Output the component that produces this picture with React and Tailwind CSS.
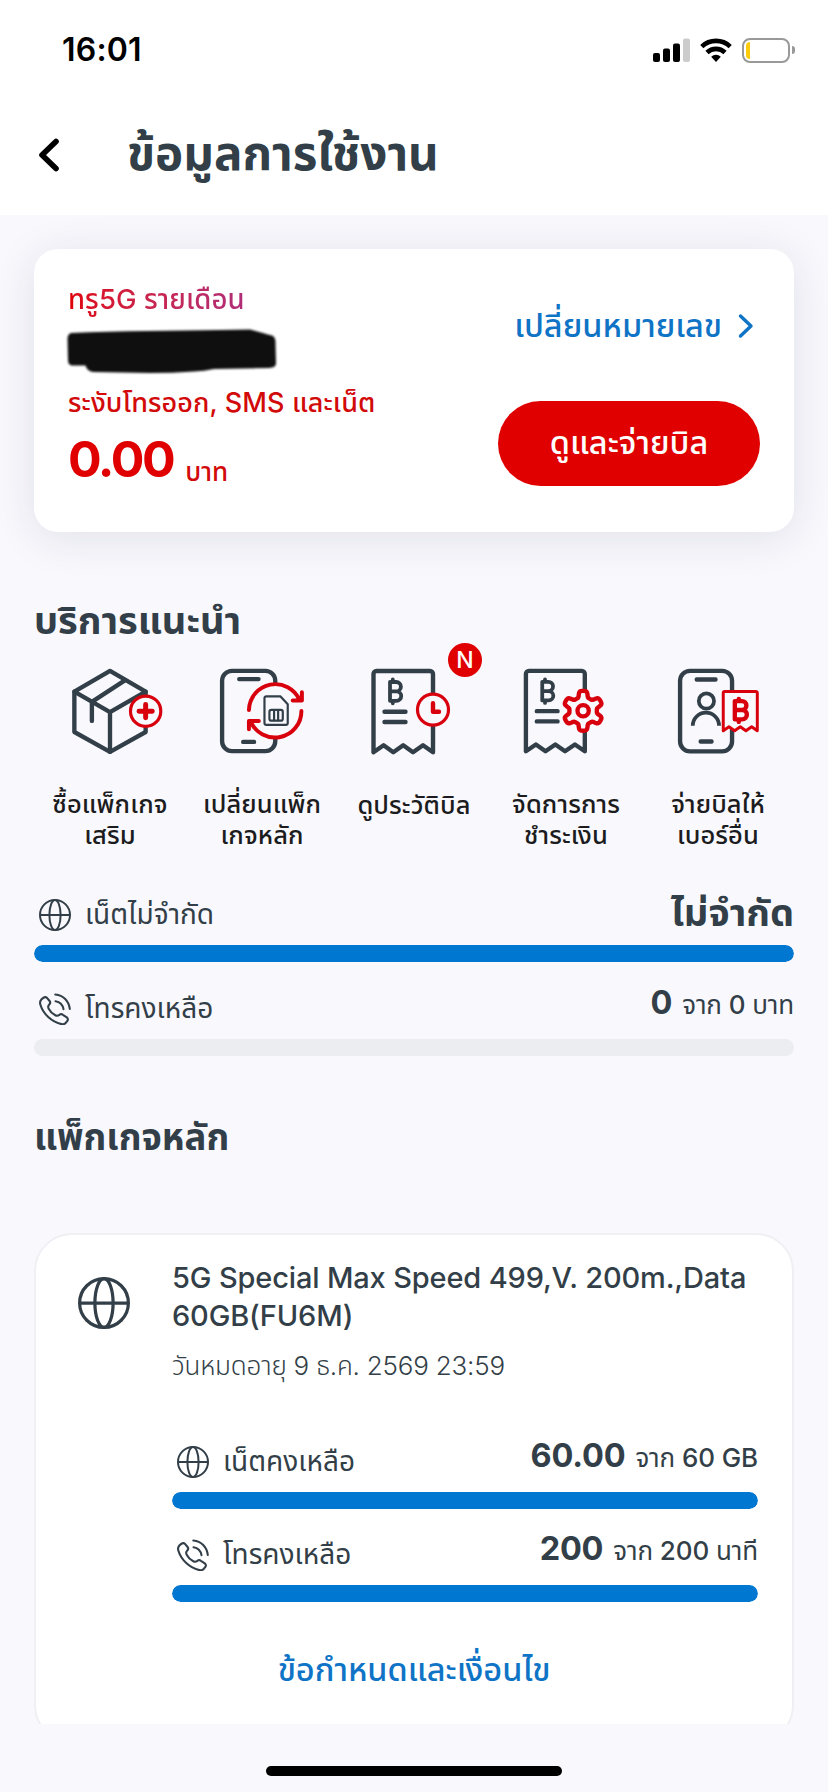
import React from "react";

const services = [
  { icon: PackageIcon, lines: ["ซื้อแพ็กเกจ", "เสริม"] },
  { icon: ChangePlanIcon, lines: ["เปลี่ยนแพ็ก", "เกจหลัก"] },
  { icon: BillHistoryIcon, lines: ["ดูประวัติบิล"], badge: "N" },
  { icon: PaymentIcon, lines: ["จัดการการ", "ชำระเงิน"] },
  { icon: PayForOtherIcon, lines: ["จ่ายบิลให้", "เบอร์อื่น"] },
];

const overview = [
  { icon: GlobeIcon, label: "เน็ตไม่จำกัด", total: "ไม่จำกัด", percent: 100 },
  { icon: CallIcon, label: "โทรคงเหลือ", value: "0", suffix: "จาก 0 บาท", percent: 0 },
];

const packageUsage = [
  { icon: GlobeIcon, label: "เน็ตคงเหลือ", value: "60.00", suffix: "จาก 60 GB", percent: 100 },
  { icon: CallIcon, label: "โทรคงเหลือ", value: "200", suffix: "จาก 200 นาที", percent: 100 },
];

// six rounded teeth, one pointing straight up
const gearPath =
  Array.from({ length: 120 }, (_, i) => {
    const a = (i / 120) * Math.PI * 2;
    const r = 17 + 3.2 * Math.tanh(2.4 * Math.cos(6 * a));
    const x = 77.3 + r * Math.sin(a);
    const y = 50.3 - r * Math.cos(a);
    return `${i ? "L" : "M"}${x.toFixed(2)} ${y.toFixed(2)}`;
  }).join("") + "Z";

function ServiceSvg({ children }) {
  return (
    <svg
      viewBox="0 0 120 100"
      fill="none"
      strokeLinecap="round"
      strokeLinejoin="round"
      strokeWidth="4.400"
      className="h-[100px] w-[120px] stroke-[#333f48]"
    >
      {children}
    </svg>
  );
}

function PackageIcon() {
  return (
    <ServiceSvg>
      <path d="M60 10 24 31v40.700L60 91.700l36-20V31L60 10Z" />
      <path d="M24 31l36 20.700L96 31M60 51.700v40M41.700 60.500V41.300L75 19.500" />
      <circle cx="96" cy="50.700" r="15.300" strokeWidth="3.200" className="fill-[#f8f8fd] stroke-[#d9000d]" />
      <path d="M96 44v13.400M89.300 50.700h13.400" strokeWidth="5" className="stroke-[#d9000d]" />
    </ServiceSvg>
  );
}

function ChangePlanIcon() {
  return (
    <ServiceSvg>
      <rect x="19.700" y="10" width="53.700" height="81" rx="10" />
      <path d="M37 18.300h19.500M41 81.700h11" />
      <circle cx="73.500" cy="50" r="26.500" stroke="none" className="fill-[#f8f8fd]" />
      <g strokeWidth="4" className="stroke-[#d9000d]">
        <path d="M46.800 49.500A26.700 26.700 0 0 1 98 39.500M100.300 31.500V40H91" />
        <path d="M99.800 50.500A26.700 26.700 0 0 1 48.500 61M46.800 69v-8.500h10" />
      </g>
      <g strokeWidth="2.200">
        <path d="M64.500 35.700h14l7.500 8v18.800a2 2 0 0 1-2 2H64.500a2 2 0 0 1-2-2V37.700a2 2 0 0 1 2-2Z" />
        <rect x="67.500" y="49.300" width="13.500" height="11" rx="2" />
        <path d="M72.200 49.500v10.500M76.300 49.500v10.500" />
      </g>
    </ServiceSvg>
  );
}

function Receipt() {
  return (
    <>
      <path d="M19.500 91.200V13a3 3 0 0 1 3-3H76a3 3 0 0 1 3 3v78.200L69 84.300l-10 6.900-9.800-6.900-9.900 6.900-9.700-6.900-10.100 6.900Z" />
      <path
        d="M36 21h6.200a4.700 4.700 0 0 1 0 9.400H36h6.500a4.700 4.700 0 0 1 0 9.400H36V21ZM38.800 18.500V21M38.800 39.800v2.500"
        strokeWidth="3.800"
      />
      <path d="M30.500 50.700h21M30.500 61h21" />
    </>
  );
}

function BillHistoryIcon() {
  return (
    <ServiceSvg>
      <Receipt />
      <circle cx="79" cy="48.700" r="15.500" strokeWidth="3.200" className="fill-[#f8f8fd] stroke-[#d9000d]" />
      <path d="M79 42.300v8.400h6" className="stroke-[#d9000d]" />
    </ServiceSvg>
  );
}

function PaymentIcon() {
  return (
    <ServiceSvg>
      <Receipt />
      <path d={gearPath} className="fill-[#f8f8fd] stroke-[#d9000d]" />
      <circle cx="77.300" cy="50.300" r="5.700" className="stroke-[#d9000d]" />
    </ServiceSvg>
  );
}

function PayForOtherIcon() {
  return (
    <ServiceSvg>
      <rect x="21.700" y="10" width="52.500" height="81.300" rx="10" />
      <path d="M38.500 18.700h19M42.500 81.300h11" />
      <circle cx="48.300" cy="40.500" r="7.700" strokeWidth="3.800" />
      <path d="M34.500 65.500a13.300 13.300 0 0 1 26.600 0" strokeWidth="3.800" strokeLinecap="butt" />
      <g className="stroke-[#d9000d]">
        <path
          d="M65.300 70.500V32.200a1.500 1.500 0 0 1 1.500-1.500h31.400a1.500 1.500 0 0 1 1.500 1.500v38.300l-5.700-4-5.800 4-5.700-4-5.700 4-5.700-4-5.800 4Z"
          strokeWidth="3"
          className="fill-[#f8f8fd]"
        />
        <path d="M77 40.500h7.200a4.500 4.500 0 0 1 0 9H77h7.500a4.700 4.700 0 0 1 0 9.400H77V40.500ZM81 38.200v2.300M81 58.900v2.600" />
      </g>
    </ServiceSvg>
  );
}

function GlobeIcon({ className }) {
  return (
    <svg viewBox="0 0 32 32" fill="none" stroke="currentColor" strokeWidth="2" className={className}>
      <circle cx="16" cy="16" r="15" />
      <ellipse cx="16" cy="16" rx="5.600" ry="15" />
      <path d="M1 16h30" />
    </svg>
  );
}

function CallIcon({ className }) {
  return (
    <svg
      viewBox="0 0 32 32"
      fill="none"
      stroke="currentColor"
      strokeWidth="2.100"
      strokeLinecap="round"
      strokeLinejoin="round"
      className={className}
    >
      <path d="M4.300 4.900c1.500-1.200 3-1 4.100.400l2.200 2.700c.900 1.200.700 2.500-.300 3.500-1.300 1.300-1.400 2.700-.600 4.200 1.500 2.900 3.700 5.200 6.600 6.600 1.500.700 2.800.500 4.100-.500 1.100-.9 2.400-.9 3.500 0l3.900 2.600c1.300 1 1.400 2.500.400 3.700l-1.600 1.900c-1.200 1.300-2.600 1.500-4.300 1.100C12.500 28.700 4.300 21 1.400 11.700c-.6-2-.4-3.900 1-5.300Z" />
      <path d="M16.300 1.500C24.300 2.300 29.900 8 30.800 16M16.500 8.200c4.300.7 7.200 3.600 8 7.900" />
    </svg>
  );
}

function StatusBar() {
  return (
    <div className="flex h-[98px] items-center justify-between pt-0.5 pr-[33px] pl-[62px] text-black">
      <span className="text-[32px] leading-10 font-semibold tracking-[0.2px]">16:01</span>
      <div className="flex items-center gap-2.5">
        <svg viewBox="0 0 37 24" className="h-6 w-[37px]">
          <rect y="15" width="7" height="9" rx="2" />
          <rect x="10" y="10.500" width="7" height="13.500" rx="2" />
          <rect x="20" y="5.500" width="7" height="18.500" rx="2" />
          <rect x="30" y="0.500" width="7" height="23.500" rx="2" className="fill-[#cccccc]" />
        </svg>
        <svg viewBox="0 0 32 24" fill="none" stroke="black" strokeWidth="4.600" className="h-6 w-8">
          <path d="M1.800 8.600a20.500 20.500 0 0 1 28.400 0" />
          <path d="M7 14.500a13 13 0 0 1 18 0" />
          <path d="M16 24l-4.800-5.300a7 7 0 0 1 9.600 0Z" fill="black" stroke="none" />
        </svg>
        <div className="flex items-center gap-0.5">
          <div className="h-[25px] w-12 rounded-lg border-2 border-[#999999] p-0.5">
            <div className="h-full w-1 rounded-l-sm bg-[#fccc0a]" />
          </div>
          <div className="h-2 w-[3px] rounded-r-full bg-[#999999]" />
        </div>
      </div>
    </div>
  );
}

function Header() {
  return (
    <header className="h-[215px] bg-white">
      <StatusBar />
      <div className="flex h-[110px] items-center pl-[38px]">
        <svg
          viewBox="0 0 21 34"
          fill="none"
          stroke="black"
          strokeWidth="5.600"
          strokeLinecap="round"
          strokeLinejoin="round"
          className="mt-1 h-[34px] w-[21px]"
        >
          <path d="M18 3.500 4 17l14 13.500" />
        </svg>
        <h1 className="ml-[68px] text-[47.5px] leading-16 font-bold">ข้อมูลการใช้งาน</h1>
      </div>
    </header>
  );
}

function AccountCard() {
  return (
    <section className="flex h-[283px] justify-between rounded-3xl bg-white px-[34px] shadow-[0_6px_44px_rgba(40,40,60,0.11)]">
      <div className="flex flex-col items-start pt-8 text-[#d20a0a]">
        <p className="bg-gradient-to-r from-[#e00000] to-[#b02d78] bg-clip-text text-[27.5px] leading-9 font-medium tracking-[0.1px] text-transparent">
          ทรู5G รายเดือน
        </p>
        {/* the phone number stays scribbled out */}
        <svg viewBox="0 0 210 46" className="mt-3 -ml-px h-[46px] w-[210px] fill-[#0f0f10] blur-[0.8px]">
          <path d="M4 4Q40 2.500 80 2T153 1l30-.5q14 4 22 6 4 2 3.500 8l.5 20q0 4-7 4.500L147 40q-10 2-20 2.500-22 1.500-44 1.500l-57-1q-6-1-7.500-6.500L5 36.500Q1 36 1 31L.5 9Q1 5 4 4Z" />
        </svg>
        <p className="mt-2.5 text-[27px] leading-9 font-medium tracking-[0.1px]">ระงับโทรออก, SMS และเน็ต</p>
        <div className="mt-2.5 flex items-baseline gap-3">
          <span className="text-[50px] leading-14 font-bold tracking-[-2.4px] text-[#e00000]">0.00</span>
          <span className="translate-y-1 text-[26px] leading-9 font-medium">บาท</span>
        </div>
      </div>
      <div className="flex flex-col items-end pt-[57px]">
        <a href="#" className="flex items-center pr-1.5 text-[#0f74c6]">
          <span className="text-[32.5px] leading-10 font-medium">เปลี่ยนหมายเลข</span>
          <svg
            viewBox="0 0 16 26"
            fill="none"
            stroke="currentColor"
            strokeWidth="3.400"
            strokeLinecap="round"
            strokeLinejoin="round"
            className="ml-4 h-[26px] w-4"
          >
            <path d="M2.500 3 13 13 2.500 23" />
          </svg>
        </a>
        <button className="mt-[55px] h-[85px] w-[262px] rounded-full bg-[#e00000] pb-0.5 text-[32.5px] leading-10 font-medium text-white">
          ดูและจ่ายบิล
        </button>
      </div>
    </section>
  );
}

function Services() {
  return (
    <section className="mt-16">
      <h2 className="text-[38px] leading-12 font-bold">บริการแนะนำ</h2>
      <div className="mt-[17px] grid grid-cols-5">
        {services.map((service) => (
          <div key={service.lines[0]} className="relative flex h-[189px] flex-col items-center">
            <service.icon />
            {service.badge && (
              <span className="absolute -top-[18px] left-[110px] flex h-[34px] w-[34px] items-center justify-center rounded-full bg-[#e00000] text-[23px] leading-none font-medium text-white">
                {service.badge}
              </span>
            )}
            <p className="mt-7 text-center text-[25.5px] leading-[31px] font-medium tracking-[0.1px] whitespace-nowrap text-[#1c1c20]">
              {service.lines.map((line) => (
                <span key={line} className="block">
                  {line}
                </span>
              ))}
            </p>
          </div>
        ))}
      </div>
    </section>
  );
}

function UsageRow({ item }) {
  return (
    <div>
      <div className="flex h-12 items-center justify-between pl-[5px]">
        <div className="flex items-center gap-3.5">
          <item.icon className="h-8 w-8" />
          <span className="pb-0.5 text-[28px] leading-10 font-[450]">{item.label}</span>
        </div>
        {item.total ? (
          <span className="pb-1.5 text-[38px] leading-10 font-bold">{item.total}</span>
        ) : (
          <div className="flex items-baseline gap-2.5 pb-2.5">
            <span className="text-[32.5px] leading-10 font-bold tracking-[-0.2px]">{item.value}</span>
            <span className="text-[26px] leading-10 font-[450] tracking-[-0.1px]">{item.suffix}</span>
          </div>
        )}
      </div>
      <div className="mt-1.5 h-[17px] overflow-hidden rounded-full bg-[#ecedf1]">
        <div className="h-full rounded-full bg-[#0078d2]" style={{ width: `${item.percent}%` }} />
      </div>
    </div>
  );
}

function PackageCard() {
  return (
    <section className="mt-[72px] h-[510px] rounded-[38px] border-2 border-[#f0f0f4] bg-white">
      <div className="flex gap-[42px] pr-[34px] pl-[42px]">
        <GlobeIcon className="mt-[42px] h-[52px] w-[52px] shrink-0" />
        <div className="flex-1 pt-6">
          <h3 className="text-[29px] leading-[38px] font-medium tracking-[-0.15px]">
            5G Special Max Speed 499,V. 200m.,Data 60GB(FU6M)
          </h3>
          <p className="mt-[13px] text-[26px] leading-9 font-[350] tracking-[-0.2px]">วันหมดอายุ 9 ธ.ค. 2569 23:59</p>
          <div className="mt-[54px] flex flex-col gap-[22px]">
            {packageUsage.map((item) => (
              <UsageRow key={item.label} item={item} />
            ))}
          </div>
        </div>
      </div>
      <a href="#" className="mt-12 block text-center text-[32.5px] leading-10 font-medium text-[#0f74c6]">
        ข้อกำหนดและเงื่อนไข
      </a>
    </section>
  );
}

export default function App() {
  return (
    <div className="h-[1792px] w-[828px] overflow-hidden bg-[#f8f8fd] font-[Inter,'Noto_Sans_Thai',sans-serif] text-[#333f48]">
      <Header />
      <main className="h-[1509px] overflow-hidden px-[34px] pt-[34px]">
        <AccountCard />
        <Services />
        <section className="mt-[41px] flex flex-col gap-[23px]">
          {overview.map((item) => (
            <UsageRow key={item.label} item={item} />
          ))}
        </section>
        <h2 className="mt-[57px] text-[36.5px] leading-12 font-bold">แพ็กเกจหลัก</h2>
        <PackageCard />
      </main>
      <div className="mx-auto mt-[42px] h-2.5 w-[296px] rounded-full bg-black" />
    </div>
  );
}
